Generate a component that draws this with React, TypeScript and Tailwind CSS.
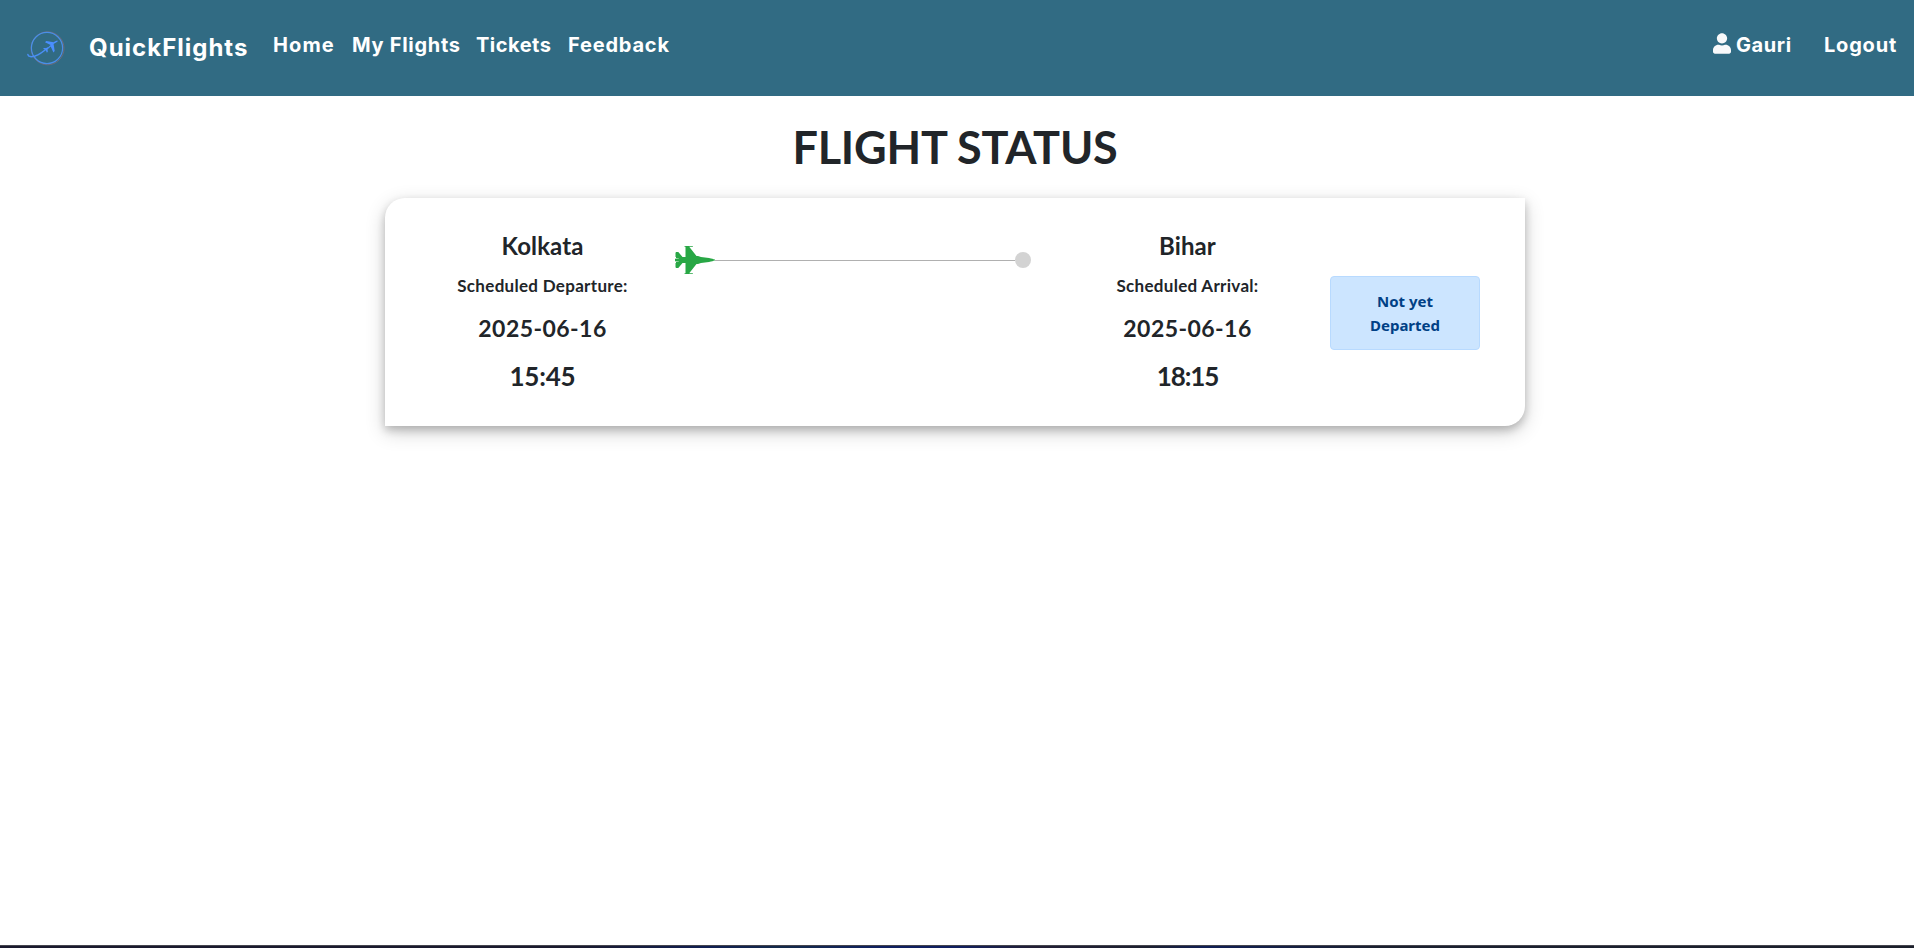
import { FaFighterJet, FaUser } from "react-icons/fa";

function Logo() {
  return (
    <svg viewBox="0 0 44 40" className="h-10 w-11" fill="none">
      <circle cx="21.5" cy="20.3" r="16.5" stroke="#6f6a78" strokeWidth="1" />
      <circle cx="21" cy="20" r="15.6" stroke="#4a8fe8" strokeWidth="1.2" />
      <path d="M1.900 26.600C2.300 29 5.500 29 9 28C13.500 26.500 17 24 21.500 20" stroke="#4a8ff5" strokeWidth="1.5" strokeLinecap="round" />
      <path d="M32 12.800c-1.500-.3-3.200.4-4.400 1.500l-7.300-1.300-1.300 1.200 5.600 2.900-3.400 3.200-3.200-.3-.9.8 2.600 1.200 1.200 2.700.9-.9-.2-2.600 3.100-2.700 2.700 5.900 1.300-1.300-1.100-7.200c1.300-.8 4-1.600 4.400-3.100z" fill="#4a8fff" />
    </svg>
  );
}

type Stop = { city: string; label: string; date: string; time: string };

function StopInfo({ stop, cityClass, timeClass }: { stop: Stop; cityClass: string; timeClass: string }) {
  return (
    <div className="flex flex-col items-center font-bold whitespace-nowrap">
      <h4 className={"mt-[33px] text-2xl leading-[29px] " + cityClass}>{stop.city}</h4>
      <p className="mt-[14px] text-[17px] leading-6 tracking-[0.3px]">{stop.label}</p>
      <p className="mt-[16px] text-[23px] leading-[29px] tracking-[0.45px]">{stop.date}</p>
      <p className={"mt-[16px] text-[26px] leading-[34px] " + timeClass}>{stop.time}</p>
    </div>
  );
}

export default function App() {
  return (
    <div className="flex h-[948px] flex-col bg-white font-['Lato','Open_Sans',sans-serif] text-[#212529]">
      <nav className="flex h-24 shrink-0 bg-[#316b83] pl-[26px] font-['Inter',sans-serif] text-[20px] font-bold text-white">
        <div className="mt-7">
          <Logo />
        </div>
        <a className="mt-8 ml-[19px] w-[184px] text-[24px] leading-8 tracking-[1px] whitespace-nowrap">QuickFlights</a>
        <div className="mt-[31px] flex h-7 leading-7 whitespace-nowrap">
          <a className="w-[79px] tracking-[1.1px]">Home</a>
          <a className="w-[124px] tracking-[0.7px]">My Flights</a>
          <a className="w-[92px] tracking-[0.5px]">Tickets</a>
          <a className="tracking-[0.8px]">Feedback</a>
        </div>
        <div className="mt-[30px] ml-auto flex h-7 leading-[30px] whitespace-nowrap">
          <FaUser className="mt-[3px] mr-[5px] h-[21px] w-[18px] text-[#f8f9fa]" />
          <a className="w-[88px] tracking-[0.6px]">Gauri</a>
          <a className="w-[90px] tracking-[0.8px]">Logout</a>
        </div>
      </nav>

      <main className="flex flex-1 flex-col items-center">
        <h1 className="mt-[19px] mr-[4px] text-[45px] leading-[64px] font-bold tracking-[-0.2px] whitespace-nowrap">FLIGHT STATUS</h1>
        <section className="mt-[19px] mr-1 grid h-[228px] w-[1140px] grid-cols-[315px_330px_315px_180px] rounded-tl-[20px] rounded-br-[20px] shadow-[0_4px_8px_0_rgba(0,0,0,0.2),0_6px_20px_0_rgba(0,0,0,0.19)]">
          <StopInfo
            stop={{ city: "Kolkata", label: "Scheduled Departure:", date: "2025-06-16", time: "15:45" }}
            cityClass="tracking-[0.1px]"
            timeClass="tracking-[-0.2px]"
          />
          <div className="mt-[46px] -ml-[25px] flex h-8 w-[356px] items-center">
            <FaFighterJet className="h-8 w-10 shrink-0 text-[#28a745]" />
            <div className="mt-px h-px flex-1 bg-[#b0b0b0]" />
            <div className="size-4 rounded-full bg-[#d3d3d3]" />
          </div>
          <StopInfo
            stop={{ city: "Bihar", label: "Scheduled Arrival:", date: "2025-06-16", time: "18:15" }}
            cityClass="tracking-[0.1px]"
            timeClass="tracking-[-1.1px]"
          />
          <div className="mt-[78px] -ml-[15px] flex h-[74px] w-[150px] items-center justify-center rounded-[4px] border border-[#b8daff] bg-[#cce5ff] px-5 text-center font-['Noto_Sans','Open_Sans',sans-serif] text-[15px] leading-6 font-bold text-[#004085]">
            <p>Not yet<br />Departed</p>
          </div>
        </section>
      </main>
      <footer className="h-[3px] shrink-0 border-t border-[#46464e] bg-[linear-gradient(90deg,#1a1a2e_0%,#1a1a2e_30%,#101f52_37%,#142a4a_41%,#0f2060_46%,#101f60_50%,#221f36_54%,#1c2030_60%,#101f55_63%,#1a2030_72%,#1b1f2b_100%)]" />
    </div>
  );
}
